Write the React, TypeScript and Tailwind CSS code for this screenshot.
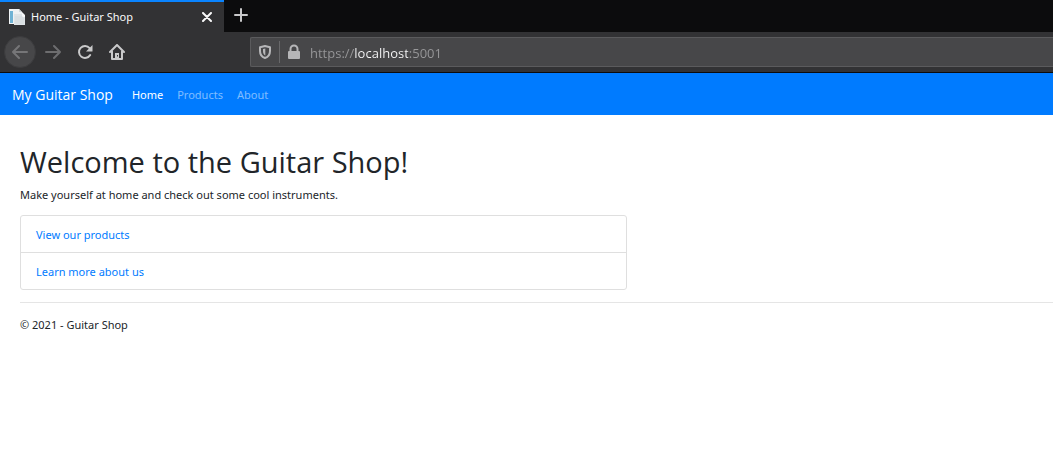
import React from "react";

function DocumentIcon() {
  return (
    <svg width="16" height="16" viewBox="0 0 16 16" aria-hidden="true" className="shrink-0">
      <path d="M0 0h8v15H0z" fill="#f2f5f7" />
      <path d="M1 2h3v12H1z" fill="#6fb2d4" />
      <path d="M4 0h6l3 3v11H4z" fill="#eef1f3" />
      <path d="M5 5h8l3 3v8H5z" fill="#dfe4e7" />
      <path d="M10 0l3 3h-3z" fill="#cfd6da" />
      <path d="M13 3v5h3V6z" fill="#f8fafb" />
      <path d="M6 8h8M6 10h9M6 12h9M6 14h9" stroke="#ccd3d7" strokeWidth=".6" />
    </svg>
  );
}

function ArrowIcon({ forward = false }: { forward?: boolean }) {
  return (
    <svg width="16" height="16" viewBox="0 0 16 16" fill="none" stroke="currentColor" strokeWidth="2" strokeLinecap="round" strokeLinejoin="round" aria-hidden="true">
      <path d={forward ? "M1 8h14M9 2l6 6-6 6" : "M15 8H1M7 2L1 8l6 6"} />
    </svg>
  );
}

function ReloadIcon() {
  return (
    <svg width="16" height="16" viewBox="0 0 16 16" fill="none" stroke="currentColor" strokeWidth="2" strokeLinecap="round" aria-hidden="true">
      <path d="M12.6 4.1A6 6 0 1 0 13.2 11" />
      <path d="M15.500 1v6a.5.5 0 0 1-.5.5H9z" fill="currentColor" stroke="none" />
    </svg>
  );
}

function HomeIcon() {
  return (
    <svg width="16" height="16" viewBox="0 0 16 16" fill="none" stroke="currentColor" strokeWidth="2" strokeLinecap="round" strokeLinejoin="round" aria-hidden="true">
      <path d="M1 8l7-7 7 7" />
      <path d="M3 7.500v7.500h10V7.500" />
      <path d="M6 15V9h4v6z" fill="currentColor" stroke="none" />
      <path d="M8.500 11v1.500" stroke="#323234" strokeWidth="1" strokeLinecap="butt" />
    </svg>
  );
}

function ShieldIcon() {
  return (
    <svg width="16" height="16" viewBox="0 0 16 16" fill="none" stroke="currentColor" strokeWidth="2" strokeLinejoin="round" aria-hidden="true">
      <path d="M8 2l5 1.200V7c0 3.500-2 6-5 7-3-1-5-3.500-5-7V3.200z" />
      <path d="M8.300 4.500v7C6.700 10.500 6 9 6 7V5z" fill="currentColor" stroke="none" />
    </svg>
  );
}

function LockIcon() {
  return (
    <svg width="16" height="16" viewBox="0 0 16 16" aria-hidden="true">
      <path d="M4.500 8V5a3.500 3.500 0 0 1 7 0v3" fill="none" stroke="currentColor" strokeWidth="2" />
      <rect x="2" y="7" width="12" height="8" rx="1" fill="currentColor" />
    </svg>
  );
}

function BrowserChrome() {
  return (
    <header className="border-b border-[#0c0c0d] bg-[#323234]">
      <div className="flex h-8 bg-[#0c0c0d]">
        <div className="flex w-56 items-center border-t-2 border-[#0a84ff] bg-[#323234] pr-[9px] pl-[9px] text-[#f9f9fa]">
          <DocumentIcon />
          <span className="ml-1.5 flex-1">Home - Guitar Shop</span>
          <button aria-label="Close tab" className="grid size-4 place-items-center">
            <svg width="10" height="10" viewBox="0 0 10 10" stroke="currentColor" strokeWidth="2" strokeLinecap="round" aria-hidden="true">
              <path d="M1 1l8 8M9 1L1 9" />
            </svg>
          </button>
        </div>
        <button aria-label="New tab" className="grid w-[34px] place-items-center pb-0.5 text-[#c9c9ca]">
          <svg width="14" height="14" viewBox="0 0 14 14" stroke="currentColor" strokeWidth="2" strokeLinecap="round" aria-hidden="true">
            <path d="M7 1v12M1 7h12" />
          </svg>
        </button>
      </div>
      <div className="flex h-10 items-center pl-1 text-[#c9c9ca]">
        <button disabled aria-label="Back" className="grid size-8 place-items-center rounded-full border border-[#3c3c3e] bg-[#474749] text-[#767678]">
          <ArrowIcon />
        </button>
        <button disabled aria-label="Forward" className="grid h-8 w-[34px] place-items-center text-[#6d6d6f]">
          <ArrowIcon forward />
        </button>
        <button aria-label="Reload" className="grid h-8 w-[30px] place-items-center">
          <ReloadIcon />
        </button>
        <button aria-label="Home page" className="grid h-8 w-[34px] place-items-center">
          <HomeIcon />
        </button>
        <div className="ml-[116px] flex h-[30px] flex-1 items-center rounded-l-xs border border-r-0 border-[#5b5b5d] bg-[#474749] pl-1.5 text-[#b6b6b8]">
          <ShieldIcon />
          <span className="mr-1.5 ml-1.5 h-[22px] w-px bg-[#68686a]" />
          <LockIcon />
          <input
            aria-label="Address"
            defaultValue="https://localhost:5001"
            className="ml-2 min-w-0 flex-1 bg-[linear-gradient(to_right,#98989a_44px,#f9f9fa_44px,#f9f9fa_98px,#98989a_98px)] bg-clip-text pt-0.5 font-['Open_Sans',sans-serif] text-[13px] text-transparent caret-white outline-none"
          />
        </div>
      </div>
    </header>
  );
}

export default function App() {
  return (
    <div className="min-h-screen bg-white font-['Noto_Sans',sans-serif] text-[11px] leading-4 text-[#212529]">
      <BrowserChrome />
      <nav className="flex h-[42px] items-center bg-[#007bff] px-3 pt-0.5">
        <a href="#" className="mr-[19px] font-['Open_Sans',sans-serif] text-sm text-white">My Guitar Shop</a>
        <div className="flex gap-3.5 text-white/50">
          <a href="#" className="text-white">Home</a>
          <a href="#products">Products</a>
          <a href="#about">About</a>
        </div>
      </nav>
      <main className="pt-[27px] pl-5">
        <h1 className="font-['Open_Sans',sans-serif] text-[29px] leading-10">Welcome to the Guitar Shop!</h1>
        <p className="mt-[5px]">Make yourself at home and check out some cool instruments.</p>
        <ul className="mt-3 max-w-[607px] divide-y divide-[#dfdfdf] rounded-[3px] border border-[#dfdfdf]">
          <li className="px-[15px] pt-[11px] pb-[9px]">
            <a href="#products" className="text-[#007bff]">View our products</a>
          </li>
          <li className="px-[15px] pt-[11px] pb-[9px]">
            <a href="#about" className="text-[#007bff]">Learn more about us</a>
          </li>
        </ul>
      </main>
      <footer className="mt-3 ml-5 border-t border-[#e5e5e5] pt-3.5">
        <p>© 2021 - Guitar Shop</p>
      </footer>
    </div>
  );
}
